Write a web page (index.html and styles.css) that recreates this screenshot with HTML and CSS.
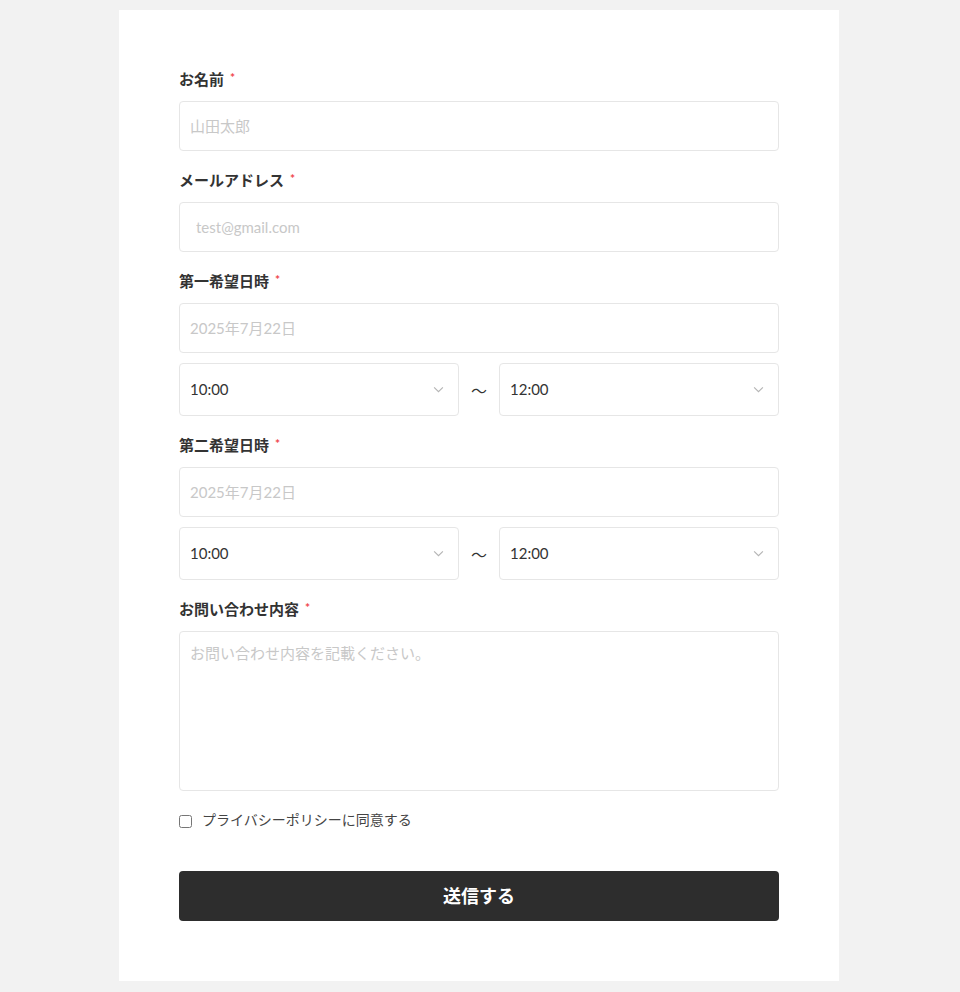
FILE: index.html
```html
<!DOCTYPE html>
<html lang="ja">
<head>
    <meta charset="UTF-8">
    <meta name="viewport" content="width=device-width, initial-scale=1.0">
    <title>お問い合わせ</title>
    <link rel="stylesheet" href="styles.css">
</head>
<body>
    <div class="card">
        <form class="form">
            <div class="field">
                <label class="label">お名前<span class="req">*</span></label>
                <input class="input" type="text" placeholder="山田太郎">
            </div>
            <div class="field">
                <label class="label">メールアドレス<span class="req">*</span></label>
                <input class="input input-mail" type="email" placeholder="test@gmail.com">
            </div>
            <div class="field">
                <label class="label">第一希望日時<span class="req">*</span></label>
                <input class="input" type="text" placeholder="2025年7月22日">
                <div class="time-row">
                    <div class="select-wrap">
                        <select class="select"><option>10:00</option></select>
                        <svg class="chev" viewBox="0 0 12 8" width="11" height="7"><path d="M1 1.5l5 5 5-5" fill="none" stroke="#b5b5b5" stroke-width="1.3"/></svg>
                    </div>
                    <span class="tilde">〜</span>
                    <div class="select-wrap">
                        <select class="select"><option>12:00</option></select>
                        <svg class="chev" viewBox="0 0 12 8" width="11" height="7"><path d="M1 1.5l5 5 5-5" fill="none" stroke="#b5b5b5" stroke-width="1.3"/></svg>
                    </div>
                </div>
            </div>
            <div class="field">
                <label class="label">第二希望日時<span class="req">*</span></label>
                <input class="input" type="text" placeholder="2025年7月22日">
                <div class="time-row">
                    <div class="select-wrap">
                        <select class="select"><option>10:00</option></select>
                        <svg class="chev" viewBox="0 0 12 8" width="11" height="7"><path d="M1 1.5l5 5 5-5" fill="none" stroke="#b5b5b5" stroke-width="1.3"/></svg>
                    </div>
                    <span class="tilde">〜</span>
                    <div class="select-wrap">
                        <select class="select"><option>12:00</option></select>
                        <svg class="chev" viewBox="0 0 12 8" width="11" height="7"><path d="M1 1.5l5 5 5-5" fill="none" stroke="#b5b5b5" stroke-width="1.3"/></svg>
                    </div>
                </div>
            </div>
            <div class="field">
                <label class="label">お問い合わせ内容<span class="req">*</span></label>
                <textarea class="textarea" placeholder="お問い合わせ内容を記載ください。"></textarea>
            </div>
            <label class="agree">
                <input type="checkbox" class="check">
                <span class="agree-text">プライバシーポリシーに同意する</span>
            </label>
            <button type="button" class="submit">送信する</button>
        </form>
    </div>
</body>
</html>
```

FILE: styles.css
```css
body {
    margin: 0;
    padding: 10px 2px 11px 0;
    background-color: #f2f2f2;
    color: #333;
    font-family: Lato, "Noto Sans CJK JP", sans-serif;
}
.card {
    width: 600px;
    margin: 0 auto;
    background-color: #fff;
    padding: 60px;
}
.form {
    display: flex;
    flex-direction: column;
    gap: 20px;
}
.field {
    display: flex;
    flex-direction: column;
    gap: 10px;
}
.label {
    font-size: 15px;
    font-weight: bold;
    line-height: 15px;
    height: 21px;
    color: #333;
}
.req {
    color: #f0444a;
    font-size: 12px;
    margin-left: 6px;
    vertical-align: 3px;
}
.input,
.textarea,
.select {
    box-sizing: border-box;
    width: 100%;
    border: 1px solid #e6e6e6;
    border-radius: 4px;
    background: #fff;
    font-family: inherit;
    font-size: 15px;
    color: #333;
    outline: none;
}
.input {
    height: 50px;
    padding: 0 10px;
}
.input-mail {
    padding-left: 16px;
}
.input::placeholder,
.textarea::placeholder {
    color: #c8c8c8;
}
.textarea {
    height: 160px;
    padding: 10px;
    resize: none;
    line-height: 22px;
}
.time-row {
    display: flex;
    align-items: center;
    gap: 12px;
}
.select-wrap {
    position: relative;
    flex: 1;
}
.select {
    height: 53px;
    padding: 0 10px 2px;
    appearance: none;
    -webkit-appearance: none;
}
.chev {
    position: absolute;
    right: 15px;
    top: 23px;
    pointer-events: none;
}
.tilde {
    font-size: 16px;
    width: 16px;
    color: #333;
}
.agree {
    display: flex;
    align-items: center;
    gap: 10px;
    font-size: 14px;
    color: #444;
    height: 20px;
}
.agree-text {
    line-height: 14px;
    margin-top: -3px;
}
.check {
    margin: 0;
    width: 13px;
    height: 13px;
}
.submit {
    margin-top: 20px;
    height: 50px;
    padding: 0 0 3px;
    border: none;
    border-radius: 4px;
    background-color: #2d2d2d;
    color: #fff;
    font-family: inherit;
    font-size: 18px;
    font-weight: bold;
}
```
